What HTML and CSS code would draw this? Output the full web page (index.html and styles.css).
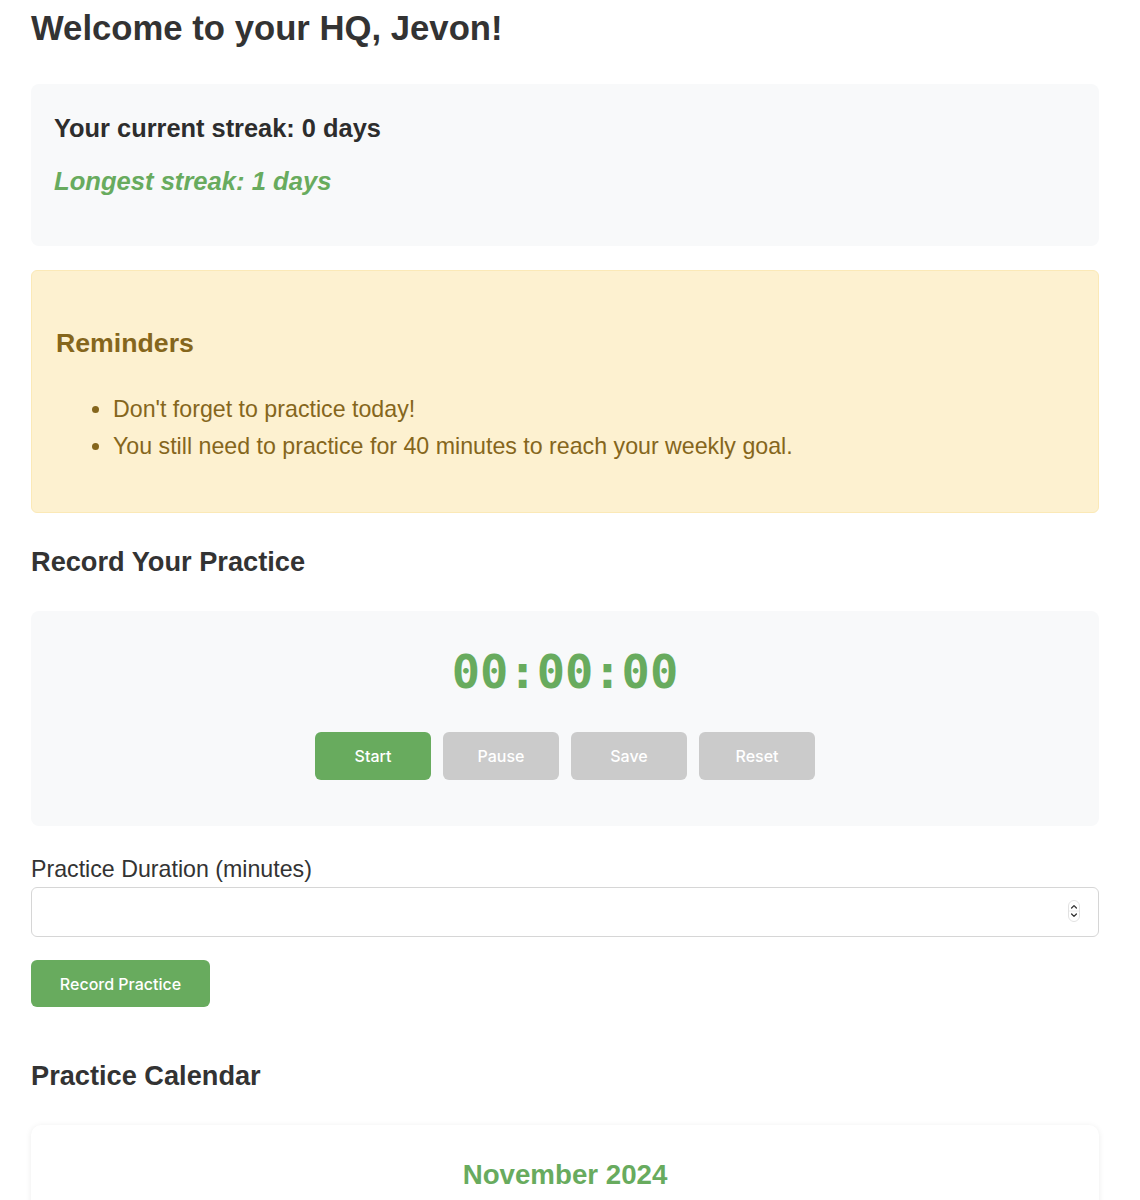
FILE: index.html
```html
<!DOCTYPE html>
<html lang="en">
<head>
    <meta charset="UTF-8">
    <meta name="viewport" content="width=device-width, initial-scale=1.0">
    <title>Practice HQ</title>
    <link rel="stylesheet" href="styles.css">
</head>
<body>
    <div class="container">
        <h1>Welcome to your HQ, Jevon!</h1>

        <div class="streak-card">
            <h3>Your current streak: 0 days</h3>
            <p class="longest">Longest streak: 1 days</p>
        </div>

        <div class="reminders">
            <h3>Reminders</h3>
            <ul>
                <li>Don't forget to practice today!</li>
                <li>You still need to practice for 40 minutes to reach your weekly goal.</li>
            </ul>
        </div>

        <h2>Record Your Practice</h2>

        <div class="timer-card">
            <div class="timer" id="timer">00:00:00</div>
            <div class="timer-buttons">
                <button class="btn" id="startBtn">Start</button>
                <button class="btn" id="pauseBtn" disabled>Pause</button>
                <button class="btn" id="saveBtn" disabled>Save</button>
                <button class="btn" id="resetBtn" disabled>Reset</button>
            </div>
        </div>

        <form class="practice-form">
            <label for="duration">Practice Duration (minutes)</label>
            <div class="input-wrap">
                <input type="number" id="duration">
                <span class="spinner">
                    <svg viewBox="0 0 12 22" width="12" height="22">
                        <rect x="0.5" y="0.5" width="11" height="21" rx="5.5" fill="#fff" stroke="#e2e2e2"/>
                        <line x1="1" y1="11" x2="11" y2="11" stroke="#ececec"/>
                        <path d="M3.6 8 L6 5.6 L8.4 8" fill="none" stroke="#333" stroke-width="1.3" stroke-linecap="round" stroke-linejoin="round"/>
                        <path d="M3.6 14 L6 16.4 L8.4 14" fill="none" stroke="#333" stroke-width="1.3" stroke-linecap="round" stroke-linejoin="round"/>
                    </svg>
                </span>
            </div>
            <button type="button" class="btn record-btn">Record Practice</button>
        </form>

        <h2 class="calendar-title">Practice Calendar</h2>

        <div class="calendar-card">
            <h3 class="month">November 2024</h3>
        </div>
    </div>
</body>
</html>
```

FILE: styles.css
```css
body {
    margin: 0;
    background: #fff;
    color: #333;
    font-family: 'Liberation Sans', Arial, sans-serif;
}

.container {
    width: 1068px;
    padding: 8px 0 0 31px;
}

h1 {
    margin: 0 0 36px 0;
    font-size: 34.7px;
    line-height: 40px;
    font-weight: bold;
}

h2 {
    margin: 33px 0;
    font-size: 27.2px;
    line-height: 32px;
}

/* streak */
.streak-card {
    background: #f8f9fa;
    border-radius: 8px;
    padding: 29px 23px 50px;
}

.streak-card h3 {
    margin: 0;
    font-size: 25.4px;
    line-height: 30px;
    color: #2d2d2d;
}

.longest {
    margin: 23px 0 0 0;
    font-size: 25.6px;
    line-height: 30px;
    font-weight: bold;
    font-style: italic;
    color: #68ab5e;
}

/* reminders */
.reminders {
    margin-top: 24px;
    background: #fdf1d0;
    border: 1px solid #fbe9b7;
    border-radius: 6px;
    padding: 0 24px;
    color: #85661c;
}

.reminders h3 {
    margin: 57px 0 0 0;
    font-size: 26.7px;
    line-height: 30px;
}

.reminders ul {
    margin: 33px 0 47px 0;
    padding-left: 57px;
}

.reminders li {
    font-size: 23.2px;
    line-height: 37px;
}

/* timer */
.timer-card {
    background: #f8f9fa;
    border-radius: 8px;
    padding: 33px 20px 46px;
    text-align: center;
}

.timer {
    font-family: 'DejaVu Sans Mono', monospace;
    font-weight: bold;
    font-size: 47px;
    line-height: 56px;
    color: #68ab5e;
}

.timer-buttons {
    margin-top: 32px;
    display: flex;
    justify-content: center;
    gap: 12px;
}

.btn {
    height: 48px;
    border: none;
    border-radius: 6px;
    background: #68ab5e;
    color: #fff;
    font-family: Inter, 'Liberation Sans', sans-serif;
    font-size: 16px;
    font-weight: 500;
    cursor: pointer;
}

.timer-buttons .btn {
    width: 116px;
}

.btn:disabled {
    background: #cbcbcb;
    cursor: not-allowed;
}

/* form */
.practice-form {
    margin-top: 30px;
    display: flex;
    flex-direction: column;
    align-items: flex-start;
}

.practice-form label {
    font-size: 23.2px;
    line-height: 26px;
    color: #333;
}

.input-wrap {
    position: relative;
    width: 100%;
    margin-top: 5px;
}

.input-wrap input {
    box-sizing: border-box;
    width: 100%;
    height: 50px;
    border: 1px solid #d6d6d6;
    border-radius: 6px;
    padding: 0 14px;
    font-size: 18px;
    background: #fff;
    -moz-appearance: textfield;
}

.input-wrap input::-webkit-inner-spin-button,
.input-wrap input::-webkit-outer-spin-button {
    -webkit-appearance: none;
    margin: 0;
}

.spinner {
    position: absolute;
    right: 19px;
    top: 13px;
    width: 12px;
    height: 22px;
    pointer-events: none;
}

.spinner svg {
    display: block;
}

.record-btn {
    margin-top: 23px;
    width: 179px;
    height: 47px;
}

/* calendar */
.calendar-title {
    margin-top: 53px;
}

.calendar-card {
    background: #fff;
    border-radius: 10px;
    box-shadow: 0 1px 6px rgba(0, 0, 0, 0.08);
    padding: 34px 24px 40px;
}

.month {
    margin: 0;
    text-align: center;
    font-size: 27.7px;
    line-height: 32px;
    color: #68ab5e;
}
```
